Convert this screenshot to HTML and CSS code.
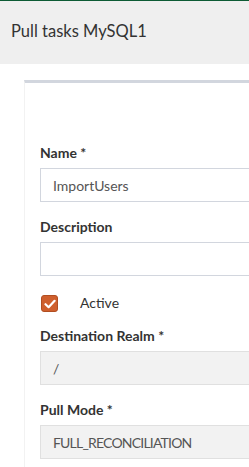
FILE: index.html
```html
<!DOCTYPE html>
<html lang="en">
<head>
    <meta charset="UTF-8">
    <meta name="viewport" content="width=device-width, initial-scale=1.0">
    <title>Pull tasks MySQL1</title>
    <link rel="stylesheet" href="styles.css">
</head>
<body>

    <div class="topbar">
        <h1>Pull tasks MySQL1</h1>
    </div>

    <div class="content">
        <div class="card">
            <!-- Task form -->
            <form class="task-form">
                <div class="form-group">
                    <label for="name">Name *</label>
                    <input type="text" id="name" class="form-control" value="ImportUsers">
                </div>
                <div class="form-group">
                    <label for="description">Description</label>
                    <input type="text" id="description" class="form-control">
                </div>
                <div class="check-row">
                    <span class="check-box">
                        <svg width="12" height="10" viewBox="0 0 12 10"><path d="M1.5 5.2 L4.6 8.2 L10.6 1.8" fill="none" stroke="#fff" stroke-width="2.2" stroke-linecap="round" stroke-linejoin="round"/></svg>
                    </span>
                    <span class="check-label">Active</span>
                </div>
                <div class="form-group">
                    <label for="realm">Destination Realm *</label>
                    <input type="text" id="realm" class="form-control" value="/" disabled>
                </div>
                <div class="form-group">
                    <label for="mode">Pull Mode *</label>
                    <input type="text" id="mode" class="form-control caps" value="FULL_RECONCILIATION" disabled>
                </div>
            </form>
        </div>
    </div>

</body>
</html>
```

FILE: styles.css
```css
* {
    margin: 0;
    padding: 0;
    box-sizing: border-box;
}

body {
    background: white;
    font-family: "Lato", "Noto Sans", sans-serif;
    color: #333;
    overflow: hidden;
}

.topbar {
    border-top: 1px solid #0d5b34;
    background: #efefef;
    height: 64px;
    padding-left: 11px;
    display: flex;
    align-items: center;
}

.topbar h1 {
    font-size: 16.5px;
    font-weight: normal;
    color: #333;
    margin-top: -3px;
}

.content {
    padding: 16px 0 0 24px;
}

.card {
    width: 400px;
    border-top: 3px solid #d2d6de;
    border-left: 1px solid #f2f2f2;
    padding: 60px 0 20px 15px;
    background: white;
}

.form-group {
    margin-bottom: 15px;
}

.form-group label {
    display: block;
    font-size: 14px;
    font-weight: bold;
    line-height: 20px;
    margin-bottom: 5px;
    color: #333;
}

.form-control {
    display: block;
    width: 100%;
    height: 34px;
    border: 1px solid #d2d6de;
    padding: 0 12px;
    font-family: inherit;
    font-size: 14px;
    color: #555;
    background: white;
    outline: none;
}

.form-control:disabled {
    background: #f2f2f2;
    border-color: #e0e0e0;
    color: #555;
}

.form-control.caps {
    letter-spacing: -0.8px;
}

.check-row {
    display: flex;
    align-items: center;
    height: 22px;
    margin: 14px 0 13px 1px;
}

.check-box {
    width: 17px;
    height: 17px;
    border-radius: 3px;
    background: #cf5f2d;
    border: 1px solid #b14e22;
    display: flex;
    align-items: center;
    justify-content: center;
    margin-top: 3px;
}

.check-label {
    font-size: 14px;
    margin-left: 22px;
    color: #333;
}
```
